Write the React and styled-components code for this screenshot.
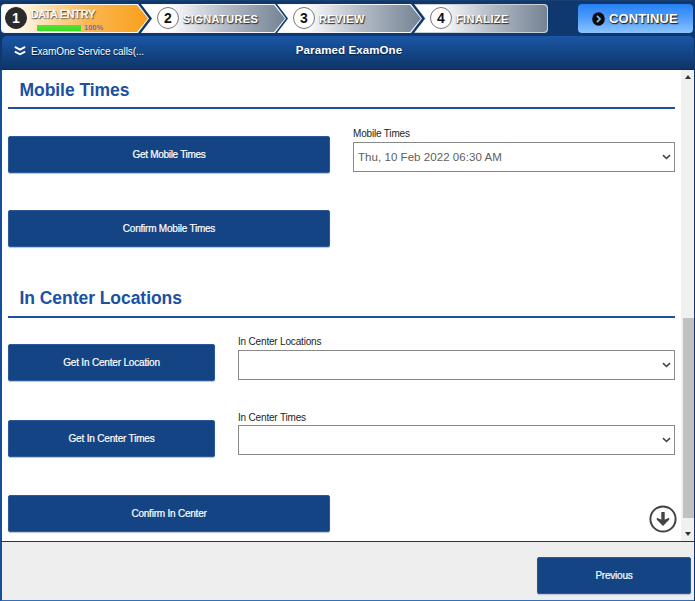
import React from "react";
import styled, { createGlobalStyle } from "styled-components";

const Global = createGlobalStyle`
  *, *::before, *::after { box-sizing: border-box; }
  body { margin: 0; overflow: hidden; font-family: "Liberation Sans", Arial, sans-serif; }
  button { font-family: inherit; }
  h1, h2 { margin: 0; }
`;

const Page = styled.div`
  width: 695px;
  height: 601px;
  display: flex;
  flex-direction: column;
  background: #0e386e;
`;

const TopBar = styled.header`
  height: 36px;
  flex: none;
  display: flex;
  align-items: flex-start;
  justify-content: space-between;
  padding: 4px 2px 0 1px;
  background: linear-gradient(#24497b 0, #0f386d 1px, #0e386e 100%);
`;

const Steps = styled.nav`
  display: flex;
`;

const shapes = {
  first: "polygon(0 0, calc(100% - 11px) 0, 100% 50%, calc(100% - 11px) 100%, 0 100%)",
  middle: "polygon(0 0, calc(100% - 11px) 0, 100% 50%, calc(100% - 11px) 100%, 0 100%, 11px 50%)",
  last: "polygon(0 0, 100% 0, 100% 100%, 0 100%, 11px 50%)",
};
const radii = { first: "4px 0 0 4px", middle: "0", last: "0 4px 4px 0" };

const StepFrame = styled.div`
  width: ${(p) => p.$width}px;
  height: 29px;
  margin-left: ${(p) => p.$overlap || 0}px;
  padding: 1px;
  background: ${(p) => (p.$shape === "last" ? "#cbd0d6" : "#f4f5f6")};
  clip-path: ${(p) => shapes[p.$shape]};
  border-radius: ${(p) => radii[p.$shape]};
`;

const StepBody = styled.div`
  display: flex;
  align-items: flex-start;
  gap: 4px;
  height: 100%;
  padding: 2px 0 0 ${(p) => p.$inset}px;
  background: ${(p) =>
    p.$active
      ? "linear-gradient(90deg, #fff 0, #fff4e3 14%, #fbb64f 60%, #f9a01d 100%)"
      : "linear-gradient(90deg, #fff 0, #fff 18%, #b4bbc6 58%, #748393 100%)"};
  clip-path: ${(p) => shapes[p.$shape]};
  border-radius: ${(p) => radii[p.$shape]};
`;

const StepNumber = styled.span`
  width: 22px;
  height: 22px;
  flex: none;
  border: 1.5px solid ${(p) => (p.$active ? "#2b2b2b" : "#777")};
  border-radius: 50%;
  background: ${(p) => (p.$active ? "#2b2b2b" : "#fff")};
  color: ${(p) => (p.$active ? "#fff" : "#111")};
  font-size: 14px;
  font-weight: bold;
  line-height: 20px;
  text-align: center;
`;

const StepLabel = styled.span`
  display: block;
  padding-top: 5px;
  color: #fff;
  font-size: 11px;
  font-weight: bold;
  line-height: 14px;
  letter-spacing: ${(p) => p.$track}px;
  text-shadow: 1px 1px 1px #333, 0 1px 1px #666;
  white-space: nowrap;
`;

const ActiveLabel = styled(StepLabel)`
  padding-top: 0;
  font-size: 10.5px;
  font-weight: normal;
  -webkit-text-stroke: 0.5px #fff;
`;

const Progress = styled.div`
  display: flex;
  align-items: center;
  gap: 3px;
  height: 8px;
  padding-left: 6px;
  margin-top: 3px;
  color: #5c7ba8;
  font-size: 7.5px;
  font-weight: bold;
  line-height: 8px;
`;

const ProgressBar = styled.span`
  width: 44px;
  height: 6px;
  background: linear-gradient(#50e238, #3ddd22);
`;

const ContinueButton = styled.button`
  width: 115px;
  height: 29px;
  display: flex;
  align-items: center;
  gap: 4px;
  padding: 0 0 0 14px;
  border: 0;
  border-radius: 4px;
  background: linear-gradient(#2680f4, #4c9bfb 45%, #8cc4fd);
  color: #fff;
  font-size: 13px;
  font-weight: bold;
  letter-spacing: 0.1px;
  text-shadow: 1px 1px 1px #222, 0 1px 1px #555;
`;

const TitleBar = styled.div`
  height: 34px;
  flex: none;
  display: grid;
  grid-template-columns: 1fr auto 1fr;
  margin: 0 1px 0 2px;
  border-bottom: 1px solid #0b2c59;
  border-radius: 5px 5px 0 0;
  background: linear-gradient(#1a56a6, #0e3567);
  color: #fff;
  text-shadow: 0 1px 1px #001b3e;
`;

const Breadcrumb = styled.div`
  display: flex;
  align-items: center;
  gap: 5px;
  padding: 0 0 4px 12px;
  height: 34px;
  font-size: 10px;
  letter-spacing: -0.08px;
`;

const PageTitle = styled.h1`
  margin-left: 2px;
  font-size: 11.5px;
  line-height: 28px;
  letter-spacing: 0.1px;
`;

const Main = styled.div`
  height: 472px;
  flex: none;
  display: flex;
  margin-right: 1px;
  border-left: 2px solid #174e9b;
  border-bottom: 1px solid #333;
  background: #fff;
`;

const Content = styled.main`
  flex: 1;
  display: flex;
  flex-direction: column;
  padding: 0 6px;
`;

const SectionTitle = styled.h2`
  height: ${(p) => p.$height}px;
  flex: none;
  display: flex;
  align-items: flex-end;
  padding: 0 0 ${(p) => p.$drop}px 11.5px;
  border-bottom: 2px solid #1b51a3;
  color: #1b51a3;
  font-size: 17.5px;
  line-height: 20px;
  letter-spacing: ${(p) => p.$track}px;
`;

const Row = styled.div`
  display: grid;
  grid-template-columns: ${(p) => p.$left}px 1fr;
  column-gap: 23px;
  margin-top: ${(p) => p.$top}px;
  height: ${(p) => p.$height || 37}px;
  align-items: end;
`;

const Button = styled.button`
  height: 37px;
  width: 100%;
  padding: 0;
  border: 1px solid #2b5896;
  border-radius: 2px;
  background: #144483;
  color: #fff;
  font-size: 10px;
  -webkit-text-stroke: 0.2px #fff;
  letter-spacing: ${(p) => p.$track ?? -0.22}px;
  box-shadow: 0 1px 1px #b8c4d4;
`;

const Field = styled.div`
  align-self: start;
  display: flex;
  flex-direction: column;
`;

const FieldLabel = styled.span`
  height: ${(p) => p.$height}px;
  color: #222;
  font-size: 10px;
  line-height: 13px;
  letter-spacing: -0.18px;
`;

const SelectBox = styled.div`
  height: 30px;
  display: flex;
  align-items: center;
  justify-content: space-between;
  padding: 0 3px 0 4px;
  border: 1px solid #898989;
  color: #606060;
  font-size: 11.5px;
  letter-spacing: ${(p) => p.$track || 0}px;
`;

const Scrollbar = styled.aside`
  width: 13px;
  flex: none;
  display: flex;
  flex-direction: column;
  align-items: center;
  padding-left: 1px;
  background: #f0f0f0;
`;

const ScrollEnd = styled.div`
  height: 14px;
  display: flex;
  align-items: center;
`;

const Thumb = styled.div`
  width: 11px;
  height: 200px;
  margin: 234px 0 9px;
  background: #c1c1c1;
`;

const DownButton = styled.div`
  position: absolute;
  left: 649px;
  top: 505px;
  width: 28px;
  height: 28px;
`;

const Footer = styled.footer`
  flex: 1;
  display: flex;
  justify-content: flex-end;
  margin-right: 1px;
  padding: 15px 3px 0 0;
  border-left: 2px solid #174e9b;
  border-bottom: 1px solid #3570b5;
  background: #eee;
`;

const FooterAction = styled.div`
  width: 154px;
`;

const Chevron = () => (
  <svg width="9" height="6" viewBox="0 0 9 6" fill="none" stroke="#444" strokeWidth="1.6">
    <path d="M1 1.2 4.5 4.5 8 1.2" />
  </svg>
);

const Select = ({ label, children, track, labelHeight = 15 }) => (
  <Field>
    <FieldLabel $height={labelHeight}>{label}</FieldLabel>
    <SelectBox $track={track}>
      <span>{children}</span>
      <Chevron />
    </SelectBox>
  </Field>
);

const Step = ({ number, label, width, shape, overlap, track, inset }) => (
  <StepFrame $width={width} $shape={shape} $overlap={overlap}>
    <StepBody $shape={shape} $inset={inset}>
      <StepNumber>{number}</StepNumber>
      <StepLabel $track={track}>{label}</StepLabel>
    </StepBody>
  </StepFrame>
);

export default function App() {
  return (
    <Page>
      <Global />
      <TopBar>
        <Steps>
          <StepFrame $width={148} $shape="first">
            <StepBody $shape="first" $active $inset={3}>
              <StepNumber $active>1</StepNumber>
              <div>
                <ActiveLabel $track={0}>DATA ENTRY</ActiveLabel>
                <Progress><ProgressBar />100%</Progress>
              </div>
            </StepBody>
          </StepFrame>
          <Step number="2" label="SIGNATURES" width={145} shape="middle" overlap={-8} inset={15} track={0.4} />
          <Step number="3" label="REVIEW" width={145} shape="middle" overlap={-9} inset={15} track={0.4} />
          <Step number="4" label="FINALIZE" width={134} shape="last" overlap={-8} inset={15} track={0.4} />
        </Steps>
        <ContinueButton>
          <svg width="13" height="14" viewBox="0 0 13 14">
            <ellipse cx="6.5" cy="7" rx="6.3" ry="6.8" fill="#0b0b0b" />
            <path d="M5 3.8 8 7 5 10.2" fill="none" stroke="#80b8f5" strokeWidth="1.8" />
          </svg>
          CONTINUE
        </ContinueButton>
      </TopBar>
      <TitleBar>
        <Breadcrumb>
          <svg width="12" height="10" viewBox="0 0 12 10" fill="none" stroke="#fff" strokeWidth="1.9">
            <path d="M.8 .9 6 3.6 11.2 .9M.8 5.6 6 8.3 11.2 5.6" />
          </svg>
          ExamOne Service calls(...
        </Breadcrumb>
        <PageTitle>Paramed ExamOne</PageTitle>
        <span />
      </TitleBar>
      <Main>
        <Content>
          <SectionTitle $height={39} $drop={7} $track={-0.05}>Mobile Times</SectionTitle>
          <Row $left={322} $top={18} $height={46}>
            <Button $track={-0.3}>Get Mobile Times</Button>
            <Select label="Mobile Times" track={0.05}>Thu, 10 Feb 2022 06:30 AM</Select>
          </Row>
          <Row $left={322} $top={37}>
            <Button>Confirm Mobile Times</Button>
          </Row>
          <SectionTitle $height={71} $drop={8} $track={-0.05}>In Center Locations</SectionTitle>
          <Row $left={207} $top={17} $height={46}>
            <Button $track={-0.18}>Get In Center Location</Button>
            <Select label="In Center Locations" />
          </Row>
          <Row $left={207} $top={30} $height={46}>
            <Button $track={-0.18}>Get In Center Times</Button>
            <Select label="In Center Times" labelHeight={14} />
          </Row>
          <Row $left={322} $top={38}>
            <Button>Confirm In Center</Button>
          </Row>
        </Content>
        <Scrollbar>
          <ScrollEnd>
            <svg width="6" height="4"><path d="M0 4 3 0 6 4Z" fill="#333" /></svg>
          </ScrollEnd>
          <Thumb />
          <ScrollEnd>
            <svg width="6" height="4"><path d="M0 0 3 4 6 0Z" fill="#333" /></svg>
          </ScrollEnd>
        </Scrollbar>
      </Main>
      <Footer>
        <FooterAction><Button>Previous</Button></FooterAction>
      </Footer>
      <DownButton>
        <svg width="28" height="28" viewBox="0 0 28 28" fill="none" stroke="#444">
          <circle cx="14" cy="14" r="12.6" strokeWidth="2" />
          <path d="M14 7V17" strokeWidth="3.4" />
          <path d="M7.8 12.8 14 15.2 20.2 12.8V14.8L14 21 7.8 14.8Z" fill="#444" stroke="none" />
        </svg>
      </DownButton>
    </Page>
  );
}
